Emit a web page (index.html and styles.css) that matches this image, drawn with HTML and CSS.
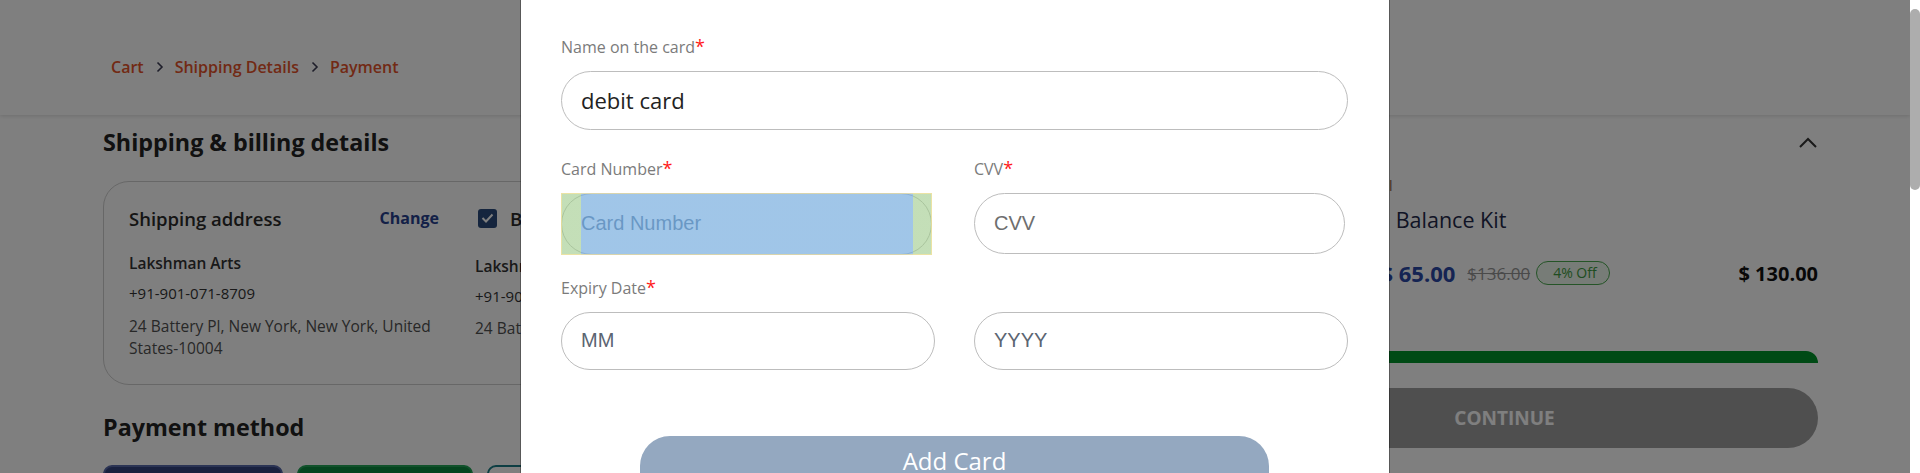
FILE: index.html
```html
<!DOCTYPE html>
<html lang="en">
<head>
<meta charset="utf-8">
<title>Payment</title>
<link rel="stylesheet" href="styles.css">
</head>
<body>
<div class="screen">
  <div class="viewport">
    <header class="topbar">
      <nav class="crumbs">
        <a class="crumb">Cart</a>
        <svg class="crumb-sep" width="8" height="12" viewBox="0 0 8 12"><polyline points="1.5,1.5 6,6 1.5,10.5" fill="none" stroke="#3d3d55" stroke-width="1.6"/></svg>
        <a class="crumb">Shipping Details</a>
        <svg class="crumb-sep" width="8" height="12" viewBox="0 0 8 12"><polyline points="1.5,1.5 6,6 1.5,10.5" fill="none" stroke="#3d3d55" stroke-width="1.6"/></svg>
        <a class="crumb">Payment</a>
      </nav>
    </header>

    <main class="content">
      <section class="left">
        <h2 class="section-title">Shipping &amp; billing details</h2>
        <div class="addr-card">
          <div class="addr-col">
            <div class="addr-head">
              <span class="addr-title">Shipping address</span>
              <a class="change">Change</a>
            </div>
            <p class="addr-name">Lakshman Arts</p>
            <p class="addr-phone">+91-901-071-8709</p>
            <p class="addr-line">24 Battery Pl, New York, New York, United States-10004</p>
          </div>
          <div class="addr-col billing">
            <div class="addr-head">
              <span class="check"><svg width="13" height="10" viewBox="0 0 13 10"><polyline points="1.5,5 5,8.5 11.5,1.5" fill="none" stroke="#fff" stroke-width="2"/></svg></span>
              <span class="addr-title">Billing address same as shipping</span>
            </div>
            <p class="addr-name">Lakshman Arts</p>
            <p class="addr-phone">+91-901-071-8709</p>
            <p class="addr-line">24 Battery Pl, New York, New York, United States-10004</p>
          </div>
        </div>
        <h2 class="section-title pm-title">Payment method</h2>
        <div class="pm-tiles">
          <div class="tile tile-navy"></div>
          <div class="tile tile-green"></div>
          <div class="tile tile-teal"></div>
        </div>
      </section>

      <aside class="summary">
        <div class="summary-head">
          <h2 class="section-title">Order Summary</h2>
          <svg width="18" height="11" viewBox="0 0 18 11"><polyline points="1,10 9,2 17,10" fill="none" stroke="#333" stroke-width="2"/></svg>
        </div>
        <div class="product">
          <div class="product-img"></div>
          <div class="product-info">
            <p class="product-brand">Wooden Tool</p>
            <p class="product-title">Wooden Balance Kit</p>
            <div class="price-row">
              <span class="qty">Qty 2</span>
              <span class="price-now">$ 65.00</span>
              <span class="price-old">$136.00</span>
              <span class="badge">4% Off</span>
              <span class="price-total">$ 130.00</span>
            </div>
          </div>
        </div>
        <div class="green-bar"></div>
        <button class="continue">CONTINUE</button>
      </aside>
    </main>

    <div class="overlay"></div>

    <div class="modal">
      <form class="card-form">
        <div class="field span2 row1">
          <label class="label">Name on the card<span class="req">*</span></label>
          <div class="input h59 value">debit card</div>
        </div>
        <div class="field row2">
          <label class="label">Card Number<span class="req">*</span></label>
          <div class="input h62 narrow placeholder inspected">
            Card Number
            <span class="hl-box"></span>
          </div>
        </div>
        <div class="field row2">
          <label class="label">CVV<span class="req">*</span></label>
          <div class="input h61 narrow placeholder">CVV</div>
        </div>
        <div class="field span2 row3">
          <label class="label">Expiry Date<span class="req">*</span></label>
          <div class="pair">
            <div class="input h58 placeholder select">MM</div>
            <div class="input h58 placeholder select">YYYY</div>
          </div>
        </div>
        <div class="span2 actions">
          <button type="button" class="add-card">Add Card</button>
        </div>
      </form>
    </div>
  </div>
  <div class="scrollbar"><div class="thumb"></div></div>
</div>
</body>
</html>
```

FILE: styles.css
```css
* { box-sizing: border-box; }
html, body { margin: 0; padding: 0; overflow: hidden; }
body {
  font-family: "Open Sans", "DejaVu Sans", sans-serif;
  color: #222;
  background: #fff;
}
p { margin: 0; }
h2 { margin: 0; }

.screen {
  display: flex;
  width: 1920px;
  height: 473px;
}
.viewport {
  position: relative;
  width: 1910px;
  height: 473px;
  overflow: hidden;
  background: #fff;
}
.scrollbar {
  width: 10px;
  height: 473px;
  background: #fff;
  padding-top: 9px;
}
.thumb {
  width: 10px;
  height: 181px;
  border-radius: 5px;
  background: #adadad;
}

/* header */
.topbar {
  height: 115px;
  padding: 18px 0 0 111px;
  display: flex;
  align-items: center;
  background: #fff;
  box-shadow: 0 1px 4px rgba(0,0,0,0.14);
  position: relative;
  z-index: 1;
}
.crumbs { display: flex; align-items: center; }
.crumb {
  font-size: 16px;
  font-weight: 600;
  color: #e4532a;
  line-height: 22px;
}
.crumb-sep { margin: 0 11px 0 12px; }

/* content */
.content {
  display: flex;
  gap: 40px;
  padding: 0 92px 0 103px;
}
.left { width: 1048px; }
.section-title {
  font-size: 23.3px;
  font-weight: 700;
  line-height: 30px;
  color: #222;
  margin-top: 12px;
}

.addr-card {
  margin-top: 24px;
  height: 204px;
  border: 1px solid #cfcfcf;
  border-radius: 26px;
  padding: 24px 25px 0 25px;
  display: flex;
  gap: 36px;
}
.addr-col { width: 310px; flex: none; }
.addr-col.billing { width: auto; flex: 1; }
.addr-head {
  display: flex;
  align-items: center;
  justify-content: space-between;
  height: 24px;
}
.addr-title {
  font-size: 18.5px;
  font-weight: 600;
  color: #2a2a2a;
  white-space: nowrap;
}
.change {
  font-size: 16px;
  font-weight: 700;
  color: #26418f;
}
.billing .addr-head { justify-content: flex-start; gap: 13px; padding-left: 3px; }
.check {
  width: 19px;
  height: 19px;
  border-radius: 3px;
  background: #2a4a7c;
  display: flex;
  align-items: center;
  justify-content: center;
  flex: none;
}
.addr-name {
  margin-top: 23px;
  font-size: 15.5px;
  font-weight: 600;
  line-height: 20px;
  color: #333;
}
.addr-phone {
  margin-top: 10px;
  font-size: 15px;
  line-height: 20px;
  color: #333;
}
.addr-line {
  margin-top: 12px;
  font-size: 15.5px;
  line-height: 22px;
  color: #505050;
}
.billing .addr-name { margin-top: 26px; }
.billing .addr-line { margin-top: 11px; white-space: nowrap; }

.pm-title { margin-top: 27px; }
.pm-tiles {
  margin-top: 23px;
  display: flex;
  gap: 14px;
}
.tile {
  height: 64px;
  border-radius: 9px;
  border: 2px solid;
}
.tile-navy { width: 180px; background: #33427f; border-color: #5768a8; }
.tile-green { width: 176px; background: #0a8a3e; border-color: #22a457; }
.tile-teal { width: 176px; background: #fff; border-color: #1b7c86; }

/* summary */
.summary { width: 627px; }
.summary-head {
  display: flex;
  align-items: center;
  justify-content: space-between;
  padding-right: 1px;
}
.summary-head svg { margin-top: 12px; }
.product {
  display: flex;
  gap: 15px;
  margin-top: 20px;
}
.product-img {
  width: 100px;
  height: 100px;
  border-radius: 10px;
  background: #f0ebe3;
  flex: none;
}
.product-info { flex: 1; }
.product-brand {
  font-size: 14px;
  line-height: 18px;
  color: #8a5a40;
}
.product-title {
  margin-top: 11px;
  font-size: 21.5px;
  line-height: 28px;
  color: #23294a;
}
.price-row {
  margin-top: 25px;
  display: flex;
  align-items: center;
  height: 28px;
}
.qty { font-size: 16px; color: #555; margin-right: 35px; }
.price-now {
  font-size: 22px;
  font-weight: 700;
  color: #2b48a6;
}
.price-old {
  margin-left: 12px;
  font-size: 17px;
  color: #949494;
  text-decoration: line-through;
}
.badge {
  margin-left: 6px;
  height: 24px;
  padding: 0 12px 0 16px;
  border: 1px solid #4aa84e;
  border-radius: 12px;
  background: #eef8ee;
  color: #3f9b42;
  font-size: 14px;
  line-height: 22px;
}
.price-total {
  margin-left: auto;
  font-size: 20px;
  font-weight: 700;
  color: #111;
}
.green-bar {
  margin-top: 64px;
  height: 12px;
  background: #00952a;
  border-top-right-radius: 12px;
  border-top-left-radius: 12px;
}
.continue {
  display: block;
  width: 100%;
  margin-top: 25px;
  height: 60px;
  border: none;
  border-radius: 30px;
  background: #9f9f9f;
  color: #fff;
  font-family: inherit;
  font-size: 19px;
  font-weight: 700;
}

/* overlay + modal */
.overlay {
  position: absolute;
  inset: 0;
  background: rgba(0,0,0,0.5);
  z-index: 5;
}
.modal {
  position: absolute;
  top: 0;
  bottom: 0;
  left: 521px;
  width: 868px;
  background: #fff;
  box-shadow: 0 0 0 1px rgba(0,0,0,0.3);
  padding: 35.5px 40px 0;
  z-index: 6;
}
.card-form {
  display: grid;
  grid-template-columns: 374px 374px;
  column-gap: 39px;
}
.span2 { grid-column: 1 / 3; }
.label {
  display: block;
  font-size: 16px;
  line-height: 20px;
  color: #7b7b7b;
  margin-bottom: 14px;
}
.req { color: #ff1a1a; font-size: 18px; }
.input {
  position: relative;
  display: flex;
  align-items: center;
  border: 1px solid #bdbdbd;
  border-radius: 31px;
  padding: 0 19px;
}
.h59 { height: 59px; }
.h62 { height: 62px; }
.h61 { height: 61px; }
.h58 { height: 58px; }
.narrow { width: 371px; }
.value {
  font-size: 22px;
  color: #222;
}
.placeholder {
  font-family: "Liberation Sans", Arial, sans-serif;
  font-size: 20px;
  color: #6e6e6e;
}
.select { color: #5b6572; }
.inspected { color: #5f7896; border-color: #c4c4c4; }
.row1 { margin-bottom: 28px; }
.row2 { margin-bottom: 22px; }
.pair {
  display: grid;
  grid-template-columns: 374px 374px;
  column-gap: 39px;
}
.hl-box {
  position: absolute;
  inset: -1px;
  border: 1px solid rgba(255,229,153,0.66);
  background: linear-gradient(to right,
    rgba(147,196,125,0.55) 0, rgba(147,196,125,0.55) 19px,
    rgba(111,168,220,0.66) 19px, rgba(111,168,220,0.66) calc(100% - 18px),
    rgba(147,196,125,0.55) calc(100% - 18px));
}
.actions {
  display: flex;
  justify-content: center;
  align-items: flex-start;
  padding-top: 66px;
}
.add-card {
  display: block;
  width: 629px;
  border: none;
  border-radius: 30px 30px 0 0;
  background: #94a8c0;
  color: #fff;
  font-family: inherit;
  font-size: 24px;
  font-weight: 500;
  line-height: 32px;
  padding: 9px 0 11px;
}
```
